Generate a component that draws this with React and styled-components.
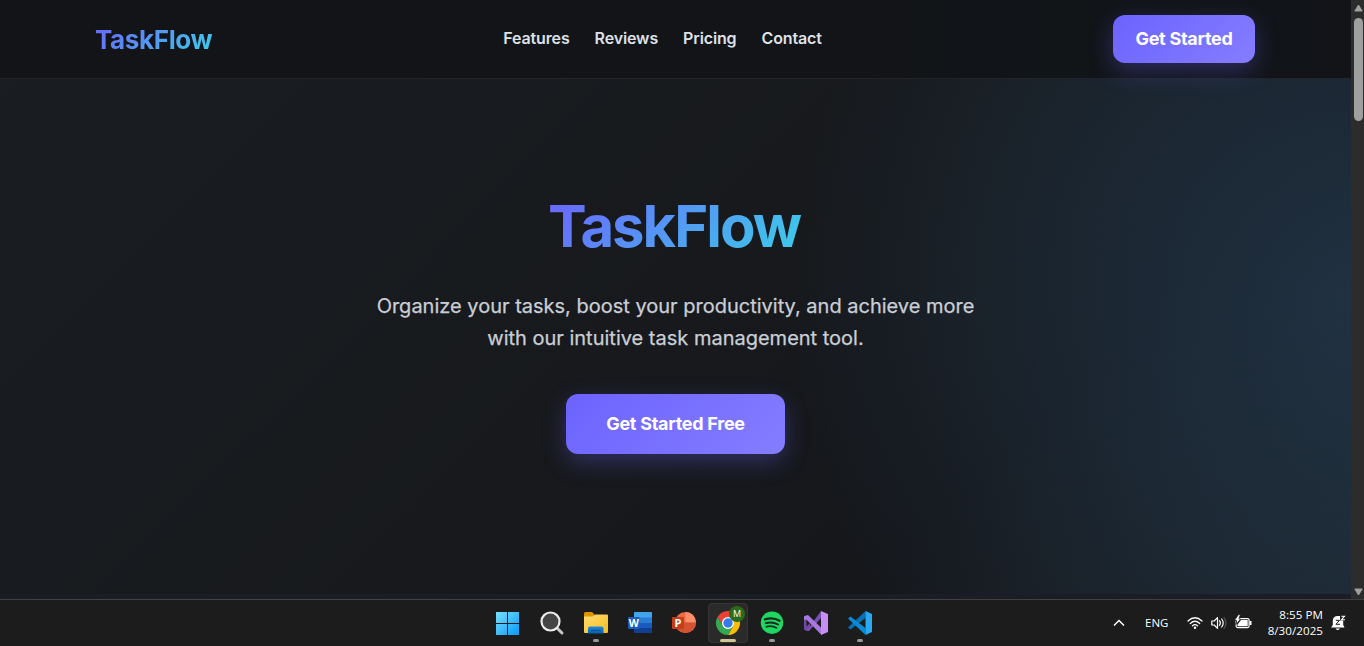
import React from "react";
import styled, { createGlobalStyle, css } from "styled-components";

const Global = createGlobalStyle`
  * { box-sizing: border-box; }
  body { margin: 0; background: #1c1c1c; overflow: hidden; font-family: Inter, sans-serif; }
`;

const Screen = styled.div`
  width: 1364px;
  height: 646px;
  display: flex;
  flex-direction: column;
  overflow: hidden;
`;
const Browser = styled.div`
  display: flex;
  height: 599px;
`;
const Page = styled.main`
  width: 1351px;
  height: 599px;
  padding-bottom: 5px;
  display: flex;
  flex-direction: column;
  background: #1a1d25;
`;
const Canvas = styled.div`
  flex: 1;
  display: flex;
  flex-direction: column;
  background:
    radial-gradient(circle 560px at 1351px 297px, rgba(54, 100, 142, 0.31) 0%, rgba(50, 100, 142, 0.19) 50%, rgba(54, 100, 150, 0) 100%),
    linear-gradient(135deg, #1a1e23 0%, #17191c 50%, #15171b 75%, #1a1f24 100%);
`;
const Header = styled.header`
  height: 79px;
  border-bottom: 1px solid #222427;
  background: linear-gradient(90deg, #131418 0%, #131418 60%, #111518 78%, #121418 100%);
  padding: 0 96px 0 95px;
  display: grid;
  grid-template-columns: 1fr auto 1fr;
  align-items: center;
`;
const gradientText = css`
  background: linear-gradient(135deg, #6c63ff 0%, #3ad0e8 100%);
  -webkit-background-clip: text;
  background-clip: text;
  color: transparent;
`;
const Logo = styled.div`
  ${gradientText}
  justify-self: start;
  font-size: 26px;
  line-height: 40px;
  font-weight: 700;
  letter-spacing: -0.36px;
  padding-top: 1px;
`;
const Nav = styled.nav`
  display: flex;
  gap: 25px;
  margin: -2px 0 0 -25px;
`;
const NavLink = styled.a`
  color: #dde1e8;
  font-size: 16px;
  line-height: 24px;
  font-weight: 600;
  letter-spacing: -0.13px;
`;
const Button = styled.button`
  border: 0;
  border-radius: 12px;
  color: #fff;
  font: 700 18px/24px Inter, sans-serif;
  letter-spacing: -0.27px;
  background: linear-gradient(135deg, #6c63ff, #857dff);
  box-shadow: 0 8px 24px rgba(108, 99, 255, 0.3);
  padding: 0;
  width: ${(p) => (p.$large ? 219 : 142)}px;
  height: ${(p) => (p.$large ? 60 : 48)}px;
  justify-self: end;
  position: relative;
`;
const Hero = styled.section`
  display: flex;
  flex-direction: column;
  align-items: center;
  padding-top: 112px;
`;
const Title = styled.h1`
  ${gradientText}
  margin: 0;
  font-size: 58px;
  line-height: 70px;
  font-weight: 700;
  letter-spacing: -2px;
  padding-right: 3px;
`;
const Lead = styled.p`
  margin: 29px 0 40px;
  width: 640px;
  text-align: center;
  color: #c9ced6;
  font-size: 20px;
  line-height: 32px;
  -webkit-text-stroke: 0.25px #c9ced6;
`;

const Scrollbar = styled.div`
  width: 13px;
  background: #2c2c2c;
  display: flex;
  flex-direction: column;
  align-items: center;
  padding: 4px 0 3px 1px;
  justify-content: space-between;
`;
const ScrollTop = styled.div`
  display: flex;
  flex-direction: column;
  gap: 6px;
  align-items: center;
`;
const Thumb = styled.div`
  width: 9px;
  height: 103px;
  border-radius: 5px;
  background: #9f9f9f;
`;

const Taskbar = styled.footer`
  height: 47px;
  border-top: 1px solid #414141;
  background: #1c1c1c;
  display: flex;
  justify-content: space-between;
  padding-left: 488px;
`;
const Apps = styled.div`
  display: flex;
  gap: 4px;
  padding-top: 3px;
`;
const AppButton = styled.div`
  width: 40px;
  height: 40px;
  border-radius: 4px;
  border: 1px solid ${(p) => (p.$active ? "#363636" : "transparent")};
  background: ${(p) => (p.$active ? "#2a2a2a" : "transparent")};
  display: flex;
  flex-direction: column;
  align-items: center;
  justify-content: space-between;
  padding-top: 7px;
  position: relative;
  svg { display: block; overflow: visible; }
`;
const Mark = styled.i`
  width: ${(p) => (p.$active ? 16 : 6)}px;
  height: 3px;
  border-radius: 2px;
  background: ${(p) => (p.$active ? "#d2c491" : "#999")};
`;
const Badge = styled.span`
  position: absolute;
  left: 20px;
  top: 2px;
  width: 16px;
  height: 16px;
  border-radius: 50%;
  background: #2c6a1c;
  color: #fff;
  font: 9px/16px "Open Sans", sans-serif;
  text-align: center;
`;
const Tray = styled.div`
  display: flex;
  align-items: center;
  color: #fff;
  font: 11.5px/16px "Open Sans", sans-serif;
  padding-right: 18px;
  svg { display: block; }
`;
const Lang = styled.span`
  width: 24px;
  margin: 0 18px 0 20px;
  font-size: 11.5px;
`;
const Status = styled.div`
  display: flex;
  align-items: center;
  gap: 8px;
`;
const Clock = styled.div`
  width: 64px;
  margin: 0 8px 0 7px;
  text-align: right;
  font-size: 11.6px;
  letter-spacing: 0.05px;
  white-space: nowrap;
`;

const WindowsIcon = () => (
  <svg width="24" height="24" viewBox="0 0 24 24">
    <defs>
      <linearGradient id="win" gradientUnits="userSpaceOnUse" x1="0" y1="0" x2="24" y2="24">
        <stop stopColor="#7be2fc" /><stop offset="1" stopColor="#0598f8" />
      </linearGradient>
    </defs>
    <path fill="url(#win)" d="M0 1h11v11H0zM12 1h11v11H12zM0 13h11v11H0zM12 13h11v11H12z" />
  </svg>
);
const SearchIcon = () => (
  <svg width="24" height="24" viewBox="0 0 24 24">
    <path d="M17 17l5 5" stroke="#c7c7c7" strokeWidth="3" strokeLinecap="round" />
    <circle cx="10.500" cy="10.500" r="9" fill="#454545" stroke="#ececec" strokeWidth="2.200" />
  </svg>
);
const FolderIcon = () => (
  <svg width="24" height="24" viewBox="0 0 24 24">
    <defs>
      <linearGradient id="fold" x1="0" y1="0" x2="1" y2="1"><stop stopColor="#ffdd70" /><stop offset="1" stopColor="#f9bd20" /></linearGradient>
      <linearGradient id="dock" x1="0" y1="0" x2="0" y2="1"><stop stopColor="#2189da" /><stop offset="1" stopColor="#0962ab" /></linearGradient>
    </defs>
    <path fill="#dc9700" d="M0 2.500Q0 1 1.500 1H8l2.500 2.500v5H0z" />
    <path fill="url(#fold)" d="M0 5.500h8.500l3-2H23q1 0 1 1V21q0 1-1 1H1q-1 0-1-1z" />
    <path fill="url(#dock)" d="M4 22.500V17.500q0-2 2-2h11.500q2 0 2 2v5z" />
    <path stroke="#075394" strokeWidth="1.200" d="M7 19.500h9.500" />
  </svg>
);
const WordIcon = () => (
  <svg width="24" height="24" viewBox="0 0 24 24">
    <path fill="#41a5ee" d="M6 2q0-1 1-1h16q1 0 1 1v5H6z" />
    <path fill="#2b7cd3" d="M6 6.500h18V12H6z" />
    <path fill="#185abd" d="M6 12h18v5.500H6z" />
    <path fill="#103f91" d="M6 17h18v4q0 1-1 1H7q-1 0-1-1z" />
    <rect x="0" y="6" width="11.500" height="12" rx="1" fill="#1d5cbd" />
    <text x="5.800" y="16" textAnchor="middle" fill="#fff" fontFamily="Open Sans" fontWeight="700" fontSize="10.500">W</text>
  </svg>
);
const PowerPointIcon = () => (
  <svg width="24" height="24" viewBox="0 0 24 24">
    <circle cx="13.500" cy="11.500" r="10.500" fill="#ed6c47" />
    <path fill="#ff8f6b" d="M13.500 1A10.500 10.500 0 0 1 24 11.500H13.500z" />
    <path fill="#d35230" d="M3 11.500h21a10.500 10.500 0 0 1-21 0z" />
    <rect x="0" y="6" width="12" height="12" rx="1" fill="#c43e1c" />
    <text x="6" y="16" textAnchor="middle" fill="#fff" fontFamily="Open Sans" fontWeight="700" fontSize="11">P</text>
  </svg>
);
const ChromeIcon = () => (
  <svg width="24" height="24" viewBox="0 0 24 24">
    <path fill="#ea4335" d="M1.600 6A12 12 0 0 1 22.400 6H12L6.800 15z" />
    <path fill="#fbbc04" d="M22.400 6A12 12 0 0 1 12 24l5.200-9L12 6z" />
    <path fill="#34a853" d="M12 24A12 12 0 0 1 1.600 6l5.200 9h10.400z" />
    <circle cx="12" cy="12" r="6" fill="#fff" />
    <circle cx="12" cy="12" r="4.700" fill="#347be8" />
  </svg>
);
const SpotifyIcon = () => (
  <svg width="24" height="24" viewBox="0 0 24 24">
    <circle cx="12" cy="11.700" r="11.200" fill="#1ed760" />
    <g fill="none" stroke="#1a2a1e" strokeLinecap="round">
      <path strokeWidth="2.300" d="M5 8.400c5-1.500 10.500-1 14.500 1.400" />
      <path strokeWidth="2" d="M5.700 12.200c4.300-1.300 8.800-.7 12.300 1.300" />
      <path strokeWidth="1.600" d="M6.300 15.700c3.700-1 7.300-.6 10.200 1.200" />
    </g>
  </svg>
);
const VisualStudioIcon = () => (
  <svg width="24" height="24" viewBox="0 0 24 24">
    <path fill="#7048a8" d="M0 5.500L2.500 4 6 7v10l-3.500 3L0 18.500z" />
    <path fill="#1c1c1c" d="M2.500 8.500v7L6 12z" />
    <path fill="#7950b5" d="M2.500 20L17 0v7L5 20z" />
    <path fill="#a878df" d="M0 5.500L4 4l13.500 13v7L2.500 8.500 0 9z" />
    <path fill="#c78ef5" d="M17 0l7 3v18l-7 3z" />
  </svg>
);
const CodeIcon = () => (
  <svg width="24" height="24" viewBox="0 0 24 24">
    <path fill="#0870b5" d="M0 16.500L17.500 0v7L2.500 18.500z" />
    <path fill="#078bd5" d="M0 7.500l2.500-2L17.500 17v7z" />
    <path fill="#2aa8f2" d="M17.500 0L24 3v18l-6.500 3z" />
  </svg>
);
const ChevronIcon = () => (
  <svg width="12" height="8" viewBox="0 0 12 8" fill="none" stroke="#fff" strokeWidth="1.500"><path d="M1 6.500l5-5 5 5" /></svg>
);
const WifiIcon = () => (
  <svg width="16" height="14" viewBox="0 0 16 14" fill="none" stroke="#fff" strokeWidth="1.250" strokeLinecap="round">
    <path d="M1 5q7-6.500 14 0M3.300 7.500q4.700-4.500 9.400 0M5.500 9.800q2.500-2.300 5 0" /><circle cx="8" cy="11.700" r="1.200" fill="#fff" stroke="none" />
  </svg>
);
const SpeakerIcon = () => (
  <svg width="16" height="14" viewBox="0 0 16 14" fill="none" stroke="#fff" strokeWidth="1.200" strokeLinejoin="round" strokeLinecap="round">
    <path d="M.8 5h2.400L6.500 1.700v10.600L3.200 9H.8zM8.500 4.700q1.700 2.300 0 4.600M10.700 3q3 4 0 8" /><path stroke="#555" d="M13 1.500q4 5.500 0 11" />
  </svg>
);
const BatteryIcon = () => (
  <svg width="17" height="14" viewBox="0 0 17 14" overflow="visible">
    <rect x="1.100" y="2.600" width="13" height="9" rx="1.500" fill="none" stroke="#fff" strokeWidth="1.200" />
    <path fill="#fff" d="M6 4h6.700v6.200H2.500V8.500zM14.700 5h1.800v4h-1.800z" />
    <path fill="#fff" stroke="#1c1c1c" strokeWidth=".8" d="M3.500-1.500L-.6 4.500h2.300L.9 8.500 5.700 3H3.900L5.400-1.500z" />
  </svg>
);
const BellIcon = () => (
  <svg width="15" height="16" viewBox="0 0 15 16">
    <path fill="#fff" d="M1.800 5.500Q2 1 6.800 1H9v4.500h3.200V10l1.300 2.500H0L1.800 10zM4.500 13.500h4.500Q6.750 16.500 4.500 13.500z" />
    <path fill="none" stroke="#1c1c1c" strokeWidth="1" d="M4.800 5.300h3.700L5 9.300h4" />
    <path fill="none" stroke="#fff" strokeWidth="1.100" d="M10.300 1.200h3.200l-3 3.500h3.500" />
  </svg>
);
const Arrow = ({ down }) => (
  <svg width="9" height="8" viewBox="0 0 9 8"><path fill="#9f9f9f" stroke="#9f9f9f" strokeLinejoin="round" d={down ? "M.8 1h7.400L4.500 7z" : "M.8 7h7.400L4.500 1z"} /></svg>
);

const apps = [
  { id: "start", Icon: WindowsIcon },
  { id: "search", Icon: SearchIcon },
  { id: "files", Icon: FolderIcon, running: true },
  { id: "word", Icon: WordIcon },
  { id: "powerpoint", Icon: PowerPointIcon },
  { id: "chrome", Icon: ChromeIcon, running: true, active: true, badge: "M" },
  { id: "spotify", Icon: SpotifyIcon, running: true },
  { id: "studio", Icon: VisualStudioIcon },
  { id: "code", Icon: CodeIcon, running: true },
];

export default function App() {
  return (
    <Screen>
      <Global />
      <Browser>
        <Page>
          <Canvas>
            <Header>
              <Logo>TaskFlow</Logo>
              <Nav>
                {["Features", "Reviews", "Pricing", "Contact"].map((t) => <NavLink key={t}>{t}</NavLink>)}
              </Nav>
              <Button>Get Started</Button>
            </Header>
            <Hero>
              <Title>TaskFlow</Title>
              <Lead>
                Organize your tasks, boost your productivity, and achieve more
                <br />
                with our intuitive task management tool.
              </Lead>
              <Button $large>Get Started Free</Button>
            </Hero>
          </Canvas>
        </Page>
        <Scrollbar>
          <ScrollTop><Arrow /><Thumb /></ScrollTop>
          <Arrow down />
        </Scrollbar>
      </Browser>
      <Taskbar>
        <Apps>
          {apps.map(({ id, Icon, running, active, badge }) => (
            <AppButton key={id} $active={active}>
              <Icon />
              {running && <Mark $active={active} />}
              {badge && <Badge>{badge}</Badge>}
            </AppButton>
          ))}
        </Apps>
        <Tray>
          <ChevronIcon />
          <Lang>ENG</Lang>
          <Status><WifiIcon /><SpeakerIcon /><BatteryIcon /></Status>
          <Clock>8:55 PM<br />8/30/2025</Clock>
          <BellIcon />
        </Tray>
      </Taskbar>
    </Screen>
  );
}
